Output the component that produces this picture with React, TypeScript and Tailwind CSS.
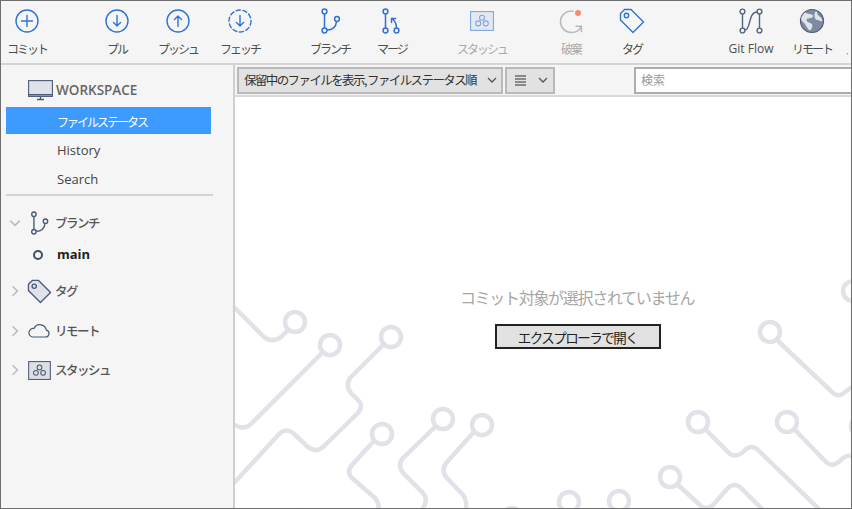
import React from "react";

const BLUE = "#2f74d0";
const SLATE = "#4a5a78";
const JP = "font-['Noto_Sans_CJK_JP','Noto_Sans',sans-serif]";

function Plus() {
  return (
    <svg width="26" height="26" viewBox="0 0 26 26" fill="none" stroke={BLUE} strokeWidth="1.4">
      <circle cx="13" cy="13" r="11" />
      <path d="M13 7.5v11M7.5 13h11" strokeLinecap="round" />
    </svg>
  );
}
function Arrow({ up, dashed }: { up?: boolean; dashed?: boolean }) {
  return (
    <svg width="26" height="26" viewBox="0 0 26 26" fill="none" stroke={BLUE} strokeWidth="1.4" strokeLinecap="round" strokeLinejoin="round">
      <circle cx="13" cy="13" r="11" strokeDasharray={dashed ? "4.2 2.6" : undefined} />
      {up ? <path d="M13 18.5V8M9.5 11.5 13 8l3.500 3.500" /> : <path d="M13 7.5V18M9.5 14.5 13 18l3.500-3.500" />}
    </svg>
  );
}
function BranchIcon({ color = BLUE, size = 26 }: { color?: string; size?: number }) {
  return (
    <svg width={size} height={size} viewBox="0 0 26 26" fill="none" stroke={color} strokeWidth="1.5">
      <circle cx="7.5" cy="3.5" r="2.4" />
      <circle cx="7.5" cy="22.5" r="2.4" />
      <circle cx="20" cy="11" r="2.4" />
      <path d="M7.5 6v14M10 22c6 0 9-4 9.6-8.600" />
    </svg>
  );
}
function MergeIcon() {
  return (
    <svg width="26" height="26" viewBox="0 0 26 26" fill="none" stroke={BLUE} strokeWidth="1.5" strokeLinecap="round" strokeLinejoin="round">
      <circle cx="6.5" cy="3.5" r="2.4" />
      <circle cx="6.5" cy="22.5" r="2.4" />
      <circle cx="17.5" cy="22.5" r="2.4" />
      <path d="M6.500 6v14M17.500 20c0-4-.5-6-4-9M12.500 14.500V10.500h4" />
    </svg>
  );
}
function StashIcon({ color = "#7ea6dc", w = 24, h = 20 }: { color?: string; w?: number; h?: number }) {
  return (
    <svg width={w} height={h} viewBox="0 0 24 20" fill="none" stroke={color} strokeWidth="1.1">
      <rect x="0.6" y="0.6" width="22.8" height="18.8" fill={color} fillOpacity="0.14" />
      <circle cx="12" cy="6.8" r="2.5" />
      <circle cx="8.2" cy="12.4" r="2.5" />
      <circle cx="15.8" cy="12.4" r="2.5" />
    </svg>
  );
}
function DiscardIcon() {
  return (
    <svg width="26" height="26" viewBox="0 0 26 26" fill="none" stroke="#b6b9bf" strokeWidth="1.6" strokeLinecap="round">
      <path d="M15 3.2C8.5 2.2 2.5 7 2.5 13.5S7.5 24.500 13.500 24.500c4.600 0 8-2.300 9.600-6" />
      <path d="M23.400 23.500v-5.200h-5.200" />
      <circle cx="20" cy="5" r="3" fill="#f58d76" stroke="none" />
    </svg>
  );
}
function TagIcon({ color = BLUE, fill = "none", size = 26 }: { color?: string; fill?: string; size?: number }) {
  return (
    <svg width={size} height={size} viewBox="0 0 26 26" fill={fill} stroke={color} strokeWidth="1.4" strokeLinejoin="round">
      <path d="M1.500 5.500 5.500 1.500h6.500L24.500 14 14 24.500 1.500 12z" />
      <circle cx="7.500" cy="7.500" r="2.200" fill="none" />
    </svg>
  );
}
function FlowIcon() {
  return (
    <svg width="26" height="26" viewBox="0 0 26 26" fill="none" stroke="#55637d" strokeWidth="1.4">
      <circle cx="4.500" cy="3.500" r="2.400" />
      <circle cx="4.500" cy="22.500" r="2.400" />
      <circle cx="21.500" cy="3.500" r="2.400" />
      <circle cx="21.500" cy="22.500" r="2.400" />
      <path d="M4.500 6v14M21.500 6v14M7 22c6 0 3-18 12-18" />
    </svg>
  );
}
function GlobeIcon() {
  return (
    <svg width="26" height="26" viewBox="0 0 26 26">
      <circle cx="13" cy="13" r="11.500" fill="#7d8aa0" stroke="#4f5d78" strokeWidth="1.200" />
      <path d="M6 4.500c3 2 7 1 8 3s-3 3-5 3-2 3 1 4 4 2 3 5-2 3-3 2.500c-3-3-3-6-6-8S2 8 6 4.500zM17 3c2 2 1 4 3 5s3 3 3.500 5c-2 1-3-1-5-1s-3-2-3-4 0-3 1.500-5z" fill="#dfe3ea" />
    </svg>
  );
}

const tools = [
  { label: "コミット", icon: <Plus />, cls: "ml-px" },
  { label: "プル", icon: <Arrow />, cls: "ml-[40px]" },
  { label: "プッシュ", icon: <Arrow up />, cls: "ml-[11px]" },
  { label: "フェッチ", icon: <Arrow dashed />, cls: "ml-[12px]" },
  { label: "ブランチ", icon: <BranchIcon />, cls: "ml-[40px]" },
  { label: "マージ", icon: <MergeIcon />, cls: "ml-[12px]" },
  { label: "スタッシュ", icon: <StashIcon />, cls: "ml-[40px]", dim: true },
  { label: "破棄", icon: <DiscardIcon />, cls: "ml-[39px]", dim: true },
  { label: "タグ", icon: <TagIcon />, cls: "ml-[11px]" },
  { label: "Git Flow", icon: <FlowIcon />, cls: "ml-[69px]", latin: true },
  { label: "リモート", icon: <GlobeIcon />, cls: "ml-[11px]" },
];

function Chevron({ down, light }: { down?: boolean; light?: boolean }) {
  const size = light ? 12 : 10;
  return (
    <svg width={size} height={size} viewBox="0 0 10 10" fill="none" stroke={light ? "#b9bcc1" : "#555"} strokeWidth="1.300">
      {down ? <path d="M1 3l4 4 4-4" /> : <path d="M3 1l4 4-4 4" />}
    </svg>
  );
}

function SectionRow({ open, icon, label, cls }: { open?: boolean; icon: React.ReactNode; label: string; cls: string }) {
  return (
    <div className={`flex items-center h-[26px] pl-[8px] ${cls}`}>
      <Chevron down={open} light />
      <div className="w-[26px] ml-[5px] flex justify-center">{icon}</div>
      <span className="ml-[3px] text-[12.500px] font-medium tracking-[-1.500px] text-[#555]">{label}</span>
    </div>
  );
}

function Circuit() {
  const circles = [
    [294, 321], [329, 344], [390, 336], [381, 433], [442, 418], [481, 424], [511, 517], [299, 519],
    [769, 331], [852, 290], [697, 421], [786, 421], [669, 476], [568, 501], [618, 500], [860, 425],
  ];
  return (
    <svg className="absolute left-0 top-0 pointer-events-none" width="852" height="509" viewBox="0 0 852 509">
      <g fill="none" stroke="#e0e2e7" strokeWidth="4.500" strokeLinecap="round" strokeLinejoin="round">
        {circles.map(([cx, cy]) => (
          <circle key={`${cx}-${cy}`} cx={cx} cy={cy} r="10" />
        ))}
        <path d="M234 307 262 335Q271 343 280 336L287 329" />
        <path d="M322 351 251 422Q243 430 234 424" />
        <path d="M383 343 349 377Q344 385 350 392L356 398Q364 405 356 413L324 444Q316 453 307 446L292 432Q286 427 279 432L234 481" />
        <path d="M371 442 351 464Q345 471 351 477L374 497Q379 503 377 509" />
        <path d="M433 427 402 457Q396 464 402 472L422 492Q428 499 421 509" />
        <path d="M472 432 446 461Q439 469 446 477L462 494Q466 499 465 509" />
        <path d="M778 341 830 390Q837 398 844 391L852 385" />
        <path d="M706 430 727 451Q734 459 744 449Q751 443 757 449L819 509" />
        <path d="M795 430 825 461Q832 468 842 457Q847 453 852 456" />
        <path d="M677 484 699 504Q705 510 712 504L727 487Q734 481 740 487L762 509" />
      </g>
    </svg>
  );
}

export default function App() {
  return (
    <div className={`relative w-[852px] h-[509px] overflow-hidden bg-white border border-[#6e6e6e] flex flex-col ${JP}`}>
      <header className="h-[55px] shrink-0 bg-[#f5f5f5] border-b-2 border-[#d4d4d4] flex items-start pt-[7px] box-content">
        {tools.map((t) => (
          <div key={t.label} className={`w-[50px] shrink-0 flex flex-col items-center ${t.cls}`}>
            <div className="h-[26px] flex items-center justify-center">{t.icon}</div>
            <span
              className={`mt-[6px] whitespace-nowrap text-[12px] leading-[18px] ${t.latin ? "font-['Open_Sans',sans-serif]" : "tracking-[-2px]"} ${t.dim ? "text-[#a9a9a9]" : "text-[#4d4d4d]"}`}
            >
              {t.label}
            </span>
          </div>
        ))}
        <span className="ml-[7px] mt-[36px] text-[12px] text-[#999]">·</span>
      </header>
      <div className="flex flex-1 min-h-0">
        <aside className="w-[234px] shrink-0 bg-[#f5f5f5] border-r-2 border-[#cfcfcf] z-10">
          <div className="flex items-center h-[42px] pt-[8px] pl-[27px]">
            <svg width="25" height="21" viewBox="0 0 25 21" fill="none" stroke={SLATE} strokeWidth="1.100">
              <rect x="0.600" y="0.600" width="23.800" height="15.800" fill="#dfe2e8" />
              <path d="M0.600 14.800h23.800M9 19.500h7M12.500 16.400v3" strokeWidth="1.400" />
            </svg>
            <span className="ml-[3px] text-[13.500px] font-semibold text-[#666] font-['Open_Sans',sans-serif]">WORKSPACE</span>
          </div>
          <div className="ml-[5px] w-[205px] h-[27px] bg-[#3d9bff] text-white text-[12px] tracking-[-2px] leading-[29px] pl-[51px]">ファイルステータス</div>
          <div className="ml-[56px] mt-[5px] h-[23px] leading-[23px] text-[13px] text-[#444] font-['Open_Sans',sans-serif]">History</div>
          <div className="ml-[56px] mt-[6px] h-[23px] leading-[23px] text-[13px] text-[#444] font-['Open_Sans',sans-serif]">Search</div>
          <div className="ml-[5px] w-[207px] h-[2px] bg-[#d2d2d2] mt-[3px]" />
          <SectionRow open cls="mt-[14px]" label="ブランチ" icon={<BranchIcon color={SLATE} size={24} />} />
          <div className="flex items-center h-[20px] mt-[9px] pl-[32px]">
            <span className="w-[10px] h-[10px] rounded-full border-[2.500px] border-[#3f4d6b]" />
            <span className="ml-[14px] text-[13px] font-bold text-[#222] font-['Open_Sans',sans-serif]">main</span>
          </div>
          <SectionRow cls="mt-[13px]" label="タグ" icon={<TagIcon color={SLATE} fill="#dfe2e8" size={25} />} />
          <SectionRow
            cls="mt-[14px]"
            label="リモート"
            icon={
              <svg width="22" height="14" viewBox="0 0 22 14" fill="none" stroke={SLATE} strokeWidth="1.200">
                <path d="M4.500 13h13a3.500 3.500 0 0 0 .8-6.900A6.500 6.500 0 0 0 6 4.500 4.300 4.300 0 0 0 4.500 13z" />
              </svg>
            }
          />
          <SectionRow cls="mt-[13px]" label="スタッシュ" icon={<StashIcon color={SLATE} w={23} h={19} />} />
        </aside>
        <main className="w-[684px] shrink-0 flex flex-col">
          <div className="h-[30px] shrink-0 bg-[#f5f5f5] border-b-2 border-[#d9d9d9] flex items-center pl-[2px] z-10 box-content">
            <div className="w-[266px] h-[27px] shrink-0 bg-[#e2e2e2] border-2 border-[#b9b9b9] flex items-center justify-between pl-[5px] pr-[4px] text-[12.500px] tracking-[-1.600px] text-[#333]">
              <span className="whitespace-nowrap">保留中のファイルを表示, ファイルステータス順</span>
              <Chevron down />
            </div>
            <div className="ml-[2px] w-[50px] h-[27px] shrink-0 bg-[#e2e2e2] border-2 border-[#b9b9b9] flex items-center justify-between pl-[8px] pr-[5px]">
              <svg width="11" height="11" viewBox="0 0 11 11" stroke="#333" strokeWidth="1.200"><path d="M0 1h11M0 4h11M0 7h11M0 10h11" /></svg>
              <Chevron down />
            </div>
            <div className="ml-[79px] w-[240px] h-[27px] shrink-0 bg-white border-2 border-[#adadad] flex items-center pl-[5px] text-[12px] text-[#999]">検索</div>
          </div>
          <div className="flex-1 flex flex-col items-center pt-[188px] z-10">
            <p className="text-[16px] leading-[24px] tracking-[-1.300px] text-[#a6a6a6]">コミット対象が選択されていません</p>
            <button className="mt-[15px] ml-[1px] w-[166px] h-[25px] bg-[#e1e1e1] border-2 border-[#222] text-[13.500px] leading-[20px] tracking-[-1.500px] text-[#222]">エクスプローラで開く</button>
          </div>
        </main>
      </div>
      <Circuit />
    </div>
  );
}
